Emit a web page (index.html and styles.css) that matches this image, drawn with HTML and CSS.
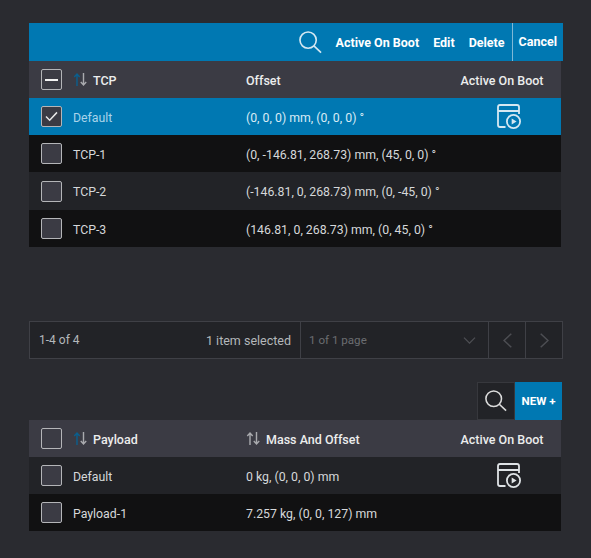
FILE: index.html
```html
<!DOCTYPE html>
<html lang="en">

<head>
    <meta charset="UTF-8">
    <title>TCP and Payload</title>
    <link rel="stylesheet" href="styles.css">
</head>

<body>
    <svg class="defs" width="0" height="0">
        <symbol id="i-search" viewBox="0 0 24 24">
            <circle cx="9.5" cy="9.5" r="8.5" fill="none" stroke="currentColor" stroke-width="1.7" />
            <path d="M15.6 15.6 L23 22.5" fill="none" stroke="currentColor" stroke-width="1.7" />
        </symbol>
        <symbol id="i-boot" viewBox="0 0 25 25">
            <path d="M8.5 23 H3 Q1 23 1 21 V3 Q1 1 3 1 H20 Q22 1 22 3 V10 M1 7 H22" fill="none" stroke="currentColor" stroke-width="1.8" />
            <circle cx="16.5" cy="17.5" r="6.6" fill="none" stroke="currentColor" stroke-width="1.8" />
            <path d="M14.7 14.6 L19.6 17.5 L14.7 20.4 Z" fill="currentColor" />
        </symbol>
    </svg>

    <div class="bar bar-selected">
        <svg class="search-icon"><use href="#i-search" /></svg>
        <span class="action first">Active On Boot</span>
        <span class="action">Edit</span>
        <span class="action">Delete</span>
        <span class="action cancel">Cancel</span>
    </div>
    <div class="table">
        <div class="row head">
            <div class="cell name"><span class="box"><span class="dash"></span></span>
                <svg class="sort" viewBox="0 0 13 13"><path class="up on" d="M3 13 V1 M.3 4 L3 1 L5.7 4" /><path class="dn" d="M9.5 0 V12 M6.8 9 L9.5 12 L12.2 9" /></svg>
                TCP</div>
            <div class="cell">Offset</div>
            <div class="cell boot">Active On Boot</div>
        </div>
        <div class="row selected">
            <div class="cell name"><span class="box"><svg class="check" viewBox="0 0 14 12"><path d="M1 6 L5 10 L13 1.5" fill="none" stroke="currentColor" stroke-width="1.6" /></svg></span>Default</div>
            <div class="cell">(0, 0, 0) mm, (0, 0, 0) °</div>
            <div class="cell boot"><svg class="boot-icon"><use href="#i-boot" /></svg></div>
        </div>
        <div class="row dark">
            <div class="cell name"><span class="box"></span>TCP-1</div>
            <div class="cell">(0, -146.81, 268.73) mm, (45, 0, 0) °</div>
            <div class="cell boot"></div>
        </div>
        <div class="row light">
            <div class="cell name"><span class="box"></span>TCP-2</div>
            <div class="cell">(-146.81, 0, 268.73) mm, (0, -45, 0) °</div>
            <div class="cell boot"></div>
        </div>
        <div class="row dark">
            <div class="cell name"><span class="box"></span>TCP-3</div>
            <div class="cell">(146.81, 0, 268.73) mm, (0, 45, 0) °</div>
            <div class="cell boot"></div>
        </div>
    </div>

    <div class="pager">
        <div class="pager-info"><span>1-4 of 4</span><span class="pager-count">1 item selected</span></div>
        <div class="pager-select"><span>1 of 1 page</span>
            <svg class="chev-down" viewBox="0 0 14 8"><path d="M.7 .7 L7 7 L13.3 .7" fill="none" stroke="currentColor" stroke-width="1.5" /></svg>
        </div>
        <div class="pager-btn"><svg class="chev" viewBox="0 0 9 15"><path d="M8.3 .7 L1 7.5 L8.3 14.3" fill="none" stroke="currentColor" stroke-width="1.5" /></svg></div>
        <div class="pager-btn"><svg class="chev" viewBox="0 0 9 15"><path d="M.7 .7 L8 7.5 L.7 14.3" fill="none" stroke="currentColor" stroke-width="1.5" /></svg></div>
    </div>

    <div class="tools">
        <div class="tool-search"><svg class="search-icon"><use href="#i-search" /></svg></div>
        <div class="tool-new">NEW +</div>
    </div>
    <div class="table">
        <div class="row head">
            <div class="cell name"><span class="box"></span>
                <svg class="sort" viewBox="0 0 13 13"><path class="up on" d="M3 13 V1 M.3 4 L3 1 L5.7 4" /><path class="dn" d="M9.5 0 V12 M6.8 9 L9.5 12 L12.2 9" /></svg>
                Payload</div>
            <div class="cell"><svg class="sort" viewBox="0 0 13 13"><path class="up" d="M3 13 V1 M.3 4 L3 1 L5.7 4" /><path class="dn" d="M9.5 0 V12 M6.8 9 L9.5 12 L12.2 9" /></svg>Mass And Offset</div>
            <div class="cell boot">Active On Boot</div>
        </div>
        <div class="row light">
            <div class="cell name"><span class="box"></span>Default</div>
            <div class="cell">0 kg, (0, 0, 0) mm</div>
            <div class="cell boot"><svg class="boot-icon"><use href="#i-boot" /></svg></div>
        </div>
        <div class="row dark">
            <div class="cell name"><span class="box"></span>Payload-1</div>
            <div class="cell">7.257 kg, (0, 0, 127) mm</div>
            <div class="cell boot"></div>
        </div>
    </div>
</body>

</html>
```

FILE: styles.css
```css
* {
    margin: 0;
    padding: 0;
    box-sizing: border-box;
}

body {
    background: #2a2b30;
    padding: 23px 28px 0 29px;
    font-family: Roboto, "Liberation Sans", sans-serif;
    font-size: 12.3px;
    color: #d6d8da;
}

.defs {
    position: absolute;
}

.bar {
    height: 38px;
    display: flex;
    align-items: center;
    justify-content: flex-end;
}

.bar-selected {
    background: #0078b2;
    color: #fff;
}

.search-icon {
    width: 23px;
    height: 23px;
    display: block;
}

.bar-selected .search-icon {
    color: #d5e8f2;
    margin-right: 14px;
}

.action {
    font-weight: 700;
    font-size: 12.5px;
    margin-right: 14px;
    white-space: nowrap;
}

.cancel {
    margin-right: 0;
    height: 38px;
    line-height: 38px;
    padding: 0 6px;
    margin-left: -7px;
    border-left: 1px solid #7fb8d6;
}

.table {
    width: 532px;
}

.row {
    display: grid;
    grid-template-columns: 217px 197px 118px;
    height: 37px;
    align-items: center;
}

.row.light:nth-child(4) {
    height: 38px;
}

.head {
    background: #3b3b44;
    color: #eceded;
    font-weight: 500;
    font-size: 12.5px;
}

.selected {
    background: #0078b2;
    color: #a9d4ea;
}

.selected .cell:nth-child(2) {
    color: #d8ebf5;
}

.dark {
    background: #111112;
}

.light {
    background: #222327;
}

.cell {
    display: flex;
    align-items: center;
    white-space: nowrap;
    line-height: 16px;
    padding-top: 2px;
}

.name {
    padding-left: 12px;
}

.boot {
    justify-content: center;
}

.box {
    width: 21px;
    height: 21px;
    margin: -2px 11px 0 0;
    flex: none;
    display: flex;
    align-items: center;
    justify-content: center;
    background: #3b3b44;
    border: 1px solid #b4b5b8;
    border-radius: 2px;
    color: #e8e8e8;
}

.dash {
    width: 13px;
    height: 2px;
    background: #f2f2f2;
}

.check {
    width: 13px;
    height: 11px;
}

.sort {
    width: 13px;
    height: 13px;
    margin: -2px 6px 0 1px;
    flex: none;
    overflow: visible;
    fill: none;
    stroke: #a9aaae;
    stroke-width: 1.4;
}

.sort .on {
    stroke: #0a5f8e;
}

.boot-icon {
    width: 25px;
    height: 25px;
    margin: -2px 0 0 14px;
    color: #dfe3e6;
}

.selected .boot-icon {
    color: #d5e8f2;
}

.pager {
    margin-top: 74px;
    width: 534px;
    height: 38px;
    display: flex;
    background: #222327;
    border: 1px solid #3f4046;
    color: #b4b8bb;
}

.pager-info {
    width: 270px;
    display: flex;
    align-items: center;
    justify-content: space-between;
    padding: 0 9px;
    font-size: 12px;
}

.pager-count {
    font-size: 12.5px;
}

.pager-select {
    width: 188px;
    display: flex;
    align-items: center;
    justify-content: space-between;
    padding: 0 12px 0 8px;
    border-left: 1px solid #3f4046;
    color: #6b6d71;
    font-size: 11.6px;
}

.chev-down {
    width: 13px;
    height: 7px;
    color: #4d4e53;
}

.pager-btn {
    width: 37px;
    display: flex;
    align-items: center;
    justify-content: center;
    border-left: 1px solid #3f4046;
}

.chev {
    width: 9px;
    height: 15px;
    color: #4d4e53;
}

.tools {
    margin-top: 23px;
    width: 533px;
    height: 38px;
    display: flex;
    justify-content: flex-end;
}

.tool-search {
    width: 38px;
    display: flex;
    align-items: center;
    justify-content: center;
    background: #222327;
    border: 1px solid #37383d;
    color: #dcdcdc;
}

.tool-search .search-icon {
    width: 22px;
    height: 22px;
}

.tool-new {
    width: 47px;
    background: #0078b2;
    color: #fff;
    font-weight: 700;
    font-size: 11.6px;
    line-height: 38px;
    text-align: center;
}
```
